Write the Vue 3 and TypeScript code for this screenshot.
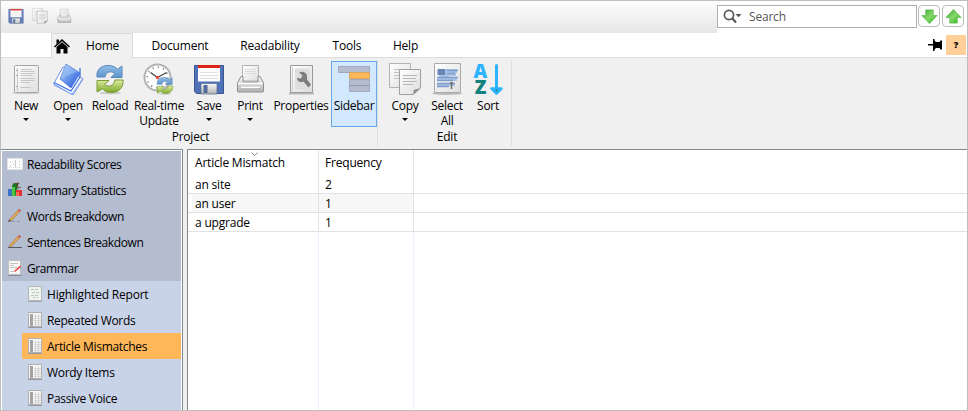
<script setup lang="ts">
import { ref } from 'vue'

interface RibbonItem {
  icon: string
  label: string
  second?: string
  menu?: boolean
  size: string
  active?: boolean
}

const tabs = [
  { name: 'Document', size: 't-document' },
  { name: 'Readability', size: 't-readability' },
  { name: 'Tools', size: 't-tools' },
  { name: 'Help', size: 't-help' },
]

const projectItems: RibbonItem[] = [
  { icon: 'new', label: 'New', menu: true, size: 'w38' },
  { icon: 'open', label: 'Open', menu: true, size: 'w46' },
  { icon: 'reload', label: 'Reload', size: 'w38' },
  { icon: 'realtime', label: 'Real-time', second: 'Update', size: 'w60' },
  { icon: 'save', label: 'Save', menu: true, size: 'w40' },
  { icon: 'print', label: 'Print', menu: true, size: 'w42' },
  { icon: 'properties', label: 'Properties', size: 'w60' },
  { icon: 'sidebar', label: 'Sidebar', size: 'w46', active: true },
]
const editItems: RibbonItem[] = [
  { icon: 'copy', label: 'Copy', menu: true, size: 'w48' },
  { icon: 'select', label: 'Select', second: 'All', size: 'w36' },
  { icon: 'sort', label: 'Sort', size: 'w46' },
]
const groups = [
  { name: 'Project', items: projectItems, side: 'project' },
  { name: 'Edit', items: editItems, side: 'edit' },
]

const sections = [
  { icon: 'scores', label: 'Readability Scores' },
  { icon: 'stats', label: 'Summary Statistics' },
  { icon: 'words', label: 'Words Breakdown' },
  { icon: 'sentences', label: 'Sentences Breakdown' },
  { icon: 'grammar', label: 'Grammar' },
]
const pages = [
  { icon: 'report', label: 'Highlighted Report' },
  { icon: 'list', label: 'Repeated Words' },
  { icon: 'list', label: 'Article Mismatches' },
  { icon: 'list', label: 'Wordy Items' },
  { icon: 'list', label: 'Passive Voice' },
]
const selected = ref('Article Mismatches')

const rows = [
  { text: 'an site', count: 2 },
  { text: 'an user', count: 1 },
  { text: 'a upgrade', count: 1 },
]
</script>

<template>
  <div class="window">
    <svg class="defs" width="0" height="0" aria-hidden="true">
      <defs>
        <linearGradient id="g-paper" x1="0" y1="0" x2="1" y2="1">
          <stop offset="0" stop-color="#fff" /><stop offset="1" stop-color="#dedede" />
        </linearGradient>
        <linearGradient id="g-blue" x1="0" y1="0" x2="1" y2="1">
          <stop offset="0" stop-color="#c6dcfb" /><stop offset=".5" stop-color="#6696ea" /><stop offset="1" stop-color="#2050d8" />
        </linearGradient>
        <linearGradient id="g-arrow" x1="0" y1="0" x2="1" y2="1">
          <stop offset="0" stop-color="#38a02c" /><stop offset=".5" stop-color="#86d86a" /><stop offset="1" stop-color="#22b414" />
        </linearGradient>
        <linearGradient id="g-green" x1="0" y1="0" x2="0" y2="1">
          <stop offset="0" stop-color="#e0eda2" /><stop offset="1" stop-color="#7aa928" />
        </linearGradient>
        <linearGradient id="g-sky" x1="0" y1="0" x2="0" y2="1">
          <stop offset="0" stop-color="#91bfe8" /><stop offset="1" stop-color="#5f93cb" />
        </linearGradient>
        <linearGradient id="g-metal" x1="0" y1="0" x2="0" y2="1">
          <stop offset="0" stop-color="#f8f8f8" /><stop offset="1" stop-color="#b4b4b4" />
        </linearGradient>
      </defs>
      <symbol id="i-new" viewBox="0 0 32 32">
        <ellipse cx="16" cy="30" rx="14" ry="1.3" fill="#bbb" opacity=".6" />
        <rect x="4.5" y="2.5" width="24" height="27" rx="1" fill="url(#g-paper)" stroke="#a5a5a5" />
        <path d="M7.5 5v23" stroke="#c9c9c9" /><path d="M6.5 7v1M6.5 12v1M6.5 23v1" stroke="#999" />
        <path d="M10.5 6.5h11M10.5 8.5h14M10.5 10.5h14M10.5 12.5h12M10.5 15.5h14M10.5 17.5h14M10.5 19.5h9M10.5 24.5h10" stroke="#c6c6c6" stroke-width="1.2" />
      </symbol>
      <symbol id="i-open" viewBox="0 0 32 32">
        <path d="M1.500 21 11 4l20 12-10 16z" fill="#fff" stroke="#4a77e0" stroke-width=".8" />
        <path d="m2 22 18 9.300L31 15" fill="none" stroke="#7c9ff0" />
        <path d="m2 19.500 17 8.500 9-14V5" fill="none" stroke="#326be0" stroke-width="1.200" />
        <path d="M8 16 14 1l14 9-9 15z" fill="url(#g-blue)" stroke="#3c69d6" stroke-width=".7" />
        <path d="m8 16 17-7.500L14 1z" fill="#9cc0f5" opacity=".6" />
      </symbol>
      <symbol id="i-reload" viewBox="0 0 32 32">
        <ellipse cx="16" cy="30" rx="11" ry="1.5" fill="#ccc" />
        <path d="M3 14C2 6 8 2.5 14 2.5c5 0 8 2 9.5 3.8L28 3v11.5H17l4-4c-4-3-9-2-10 3.5z" fill="url(#g-sky)" stroke="#5686ba" />
        <path d="M29 17c1 8-5 12.5-11 12.5-5 0-8-1.5-9.5-3.8L3 29V17.5h12l-4.500 4c4 3 9 2 10.500-4.500z" fill="url(#g-green)" stroke="#7b9b34" />
      </symbol>
      <symbol id="i-realtime" viewBox="0 0 32 32">
        <circle cx="14.500" cy="14.500" r="13" fill="#fff" stroke="#b4b4b4" stroke-width="2" />
        <circle cx="14.500" cy="14.500" r="10.300" fill="none" stroke="#777" stroke-width="1.500" stroke-dasharray="1.200 4.190" />
        <path d="M14.500 14.500 7.500 9.500M14.500 14.500l9-5" stroke="#444" stroke-width="1.300" />
        <circle cx="14.500" cy="14.500" r="1.700" fill="#e24a3b" />
        <use href="#i-reload" x="12.500" y="13" width="19" height="19" />
      </symbol>
      <symbol id="i-save" viewBox="0 0 32 32">
        <path d="M1.500 2.500h29v28H3.500l-2-2z" fill="#5072b8" stroke="#3b5590" />
        <path d="M5 3h22v15.500H5z" fill="#fcfcfc" /><path d="M5 2h22v3H5z" fill="#dd2418" />
        <path d="M7 9.500h18M7 12.500h18M7 15.500h18" stroke="#dfdfdf" />
        <path d="M8 20.500h16V31H8z" fill="url(#g-metal)" stroke="#57688c" stroke-width=".7" /><path d="M10.500 22h4v8h-4z" fill="#52699c" />
      </symbol>
      <symbol id="i-print" viewBox="0 0 32 32">
        <path d="M8.500 2.500h16V18h-16z" fill="url(#g-paper)" stroke="#b1b1b1" />
        <path d="M11 6.500h11M11 8.500h11M11 10.500h11" stroke="#dcdcdc" />
        <path d="M7 13.500 3.500 20v8q0 1 1 1h24q1 0 1-1v-8L26 13.500h-2V19H9v-5.500z" fill="url(#g-metal)" stroke="#8f8f8f" />
        <path d="M4 20.500h25M7 24.500h19" stroke="#fff" stroke-width="1.500" /><path d="M6 26h21" stroke="#aaa" />
      </symbol>
      <symbol id="i-properties" viewBox="0 0 32 32">
        <path d="M4 30.500h25" stroke="#b9b9b9" stroke-width="2" />
        <path d="M5.500 2.500h22v27h-22z" fill="url(#g-paper)" stroke="#9a9a9a" />
        <path d="M7.500 4v24" stroke="#cacaca" /><path d="M10 5.500h15v21H10z" fill="#dedede" />
        <path d="M14 9.500c3-1.500 7.500-.5 8 3.500v3.500l4 5-2.500 3-5-6c-3 1.500-6.500 0-6.500-3.500l4 .5 1.500-3z" fill="#7d7d7d" />
      </symbol>
      <symbol id="i-sidebar" viewBox="0 0 32 32">
        <path d="M.5 3.500h31v6H.5z" fill="#b4bcd0" stroke="#a3a9ba" /><path d="M11.500 16.500h20v12h-20z" fill="#b4bcd0" stroke="#a3a9ba" />
        <path d="M11.500 22.500h20" stroke="#959cae" /><path d="M11.500 9.500h20v6h-20z" fill="#ffb85a" stroke="#d9a55f" />
      </symbol>
      <symbol id="i-copy" viewBox="0 0 32 32">
        <path d="M.5.500h21v24H.5z" fill="url(#g-paper)" stroke="#b2b2b2" />
        <path d="M5 6.500h13M5 9.500h13M5 12.500h7M5 15.500h7" stroke="#c4c4c4" />
        <path d="M10.500 6.500h21V25l-7 6.500h-14z" fill="url(#g-paper)" stroke="#9f9f9f" />
        <path d="M14 12.500h14M14 15.500h13M14 18.500h14M14 21.500h10" stroke="#b6b6b6" /><path d="M24.500 31.500V27l7-2z" fill="#8e8e8e" />
      </symbol>
      <symbol id="i-select" viewBox="0 0 32 32">
        <ellipse cx="16" cy="30.500" rx="15" ry="1.500" fill="#b9b9b9" />
        <path d="M3.500.5h26v29h-26z" fill="url(#g-paper)" stroke="#aaa" />
        <path d="M6 6h20v4h-1v3h-7v2h8v3H6v-4h2v-2H6z" fill="#a9c1e4" /><path d="M6 20h18v3H6z" fill="#a9c1e4" />
        <path d="M7 6h7v6H7z" fill="#6786b5" />
        <path d="M16 7.500h11M16 10.500h8M6 14.500h21M6 17.500h16M6 20.500h18M6 23.500h12" stroke="#7f9dca" stroke-width="1.500" />
        <path d="M20.500 20v6M19 20h3" stroke="#666" stroke-width="1.300" />
      </symbol>

      <symbol id="i-scores" viewBox="0 0 16 16">
        <path d="M.5 2.500h15v11H.5z" fill="#fdfdfd" stroke="#e4e4e4" />
        <path d="M8.500 4v7M3.500 6v1M3.500 9v1M12.500 5v1M12.500 8v1M6.500 8v1" stroke="#c3c9d1" /><path d="M2 11.500h12" stroke="#d7d7d7" stroke-dasharray="1 1" />
      </symbol>
      <symbol id="i-stats" viewBox="0 0 16 16">
        <path d="M1 7h5v7H1z" fill="#3b74c2" /><path d="M5 4h5v10H5z" fill="#32a335" /><path d="m5 4 1-2h4v10l-1 2z" fill="#187b28" /><path d="M5 5h3v9H5z" fill="#4bc83e" />
        <path d="m6 2 6-1-1 1.500H9.500L11 4 9.500 6H12" fill="none" stroke="#54401a" /><path d="M9 8h6v6H9z" fill="#e93232" /><path d="M9 10h3v4H9z" fill="#ff6658" />
        <path d="m13 4 1 2h-2z" fill="#745634" />
      </symbol>
      <symbol id="i-words" viewBox="0 0 16 16">
        <path d="m2 12 9-10 2 1.500L4 13z" fill="#e1ac58" stroke="#9a7044" stroke-width=".6" /><path d="m10.500 2.500 2-1.500 1.500 1-1.500 2z" fill="#cf5c4a" /><path d="m1 14 1-2.500L4 13z" fill="#454545" />
        <path d="M3 13.500h5M10 13.500h3" stroke="#8d96a9" />
      </symbol>
      <symbol id="i-sentences" viewBox="0 0 16 16">
        <path d="m2 12 9-10 2 1.500L4 13z" fill="#e1ac58" stroke="#9a7044" stroke-width=".6" /><path d="m10.500 2.500 2-1.500 1.500 1-1.500 2z" fill="#cf5c4a" /><path d="M1 13.500h14" stroke="#555b69" />
      </symbol>
      <symbol id="i-grammar" viewBox="0 0 16 16">
        <path d="M1.500.5h12v14h-12z" fill="#f6f6f6" stroke="#bdbdbd" /><path d="M3 3.500h8M3 5.500h4M3 7.500h7M3 11.500h4" stroke="#c2c2c2" /><path d="M1 15.500h14" stroke="#8890a0" />
        <path d="m7 11 6-5.500 1 1.500-6 5z" fill="#e64848" />
      </symbol>
      <symbol id="i-report" viewBox="0 0 16 16">
        <path d="M1.500.5h13v14h-13z" fill="#f0f2f0" stroke="#b4b8b6" /><path d="M4 3.500h7M5 6.500h8M4 9.500h7M6 11.500h5" stroke="#b4cab8" stroke-dasharray="3 1" /><path d="M1 15.500h14" stroke="#a1a7b1" />
      </symbol>
      <symbol id="i-list" viewBox="0 0 16 16">
        <path d="M1.500.5h13v14h-13z" fill="#f7f7f7" stroke="#b0b0b0" /><path d="M3 2h3v12H3z" fill="#a3a3a3" />
        <path d="M7 4.500h7M7 6.500h7M7 8.500h7M7 10.500h7M7 12.500h7M8.500 2v12M11.500 2v12" stroke="#cecece" stroke-width=".8" /><path d="M1 15.500h14" stroke="#949aa4" />
      </symbol>
    </svg>

    <header class="titlebar">
      <div class="quick">
        <svg class="disk"><use href="#i-save" /></svg>
        <svg class="faded"><use href="#i-copy" /></svg>
        <svg class="faded"><use href="#i-print" /></svg>
      </div>
      <div class="searchbar">
        <div class="search">
          <svg class="glass" viewBox="0 0 20 16">
            <circle cx="6" cy="6" r="4.600" fill="none" stroke="#555" stroke-width="1.700" /><path d="m9 9 4 4.500" stroke="#555" stroke-width="2.200" /><path d="M12.500 5h6l-3 3.300z" fill="#555" />
          </svg>
          <span>Search</span>
        </div>
        <button class="step" aria-label="Next">
          <svg viewBox="0 0 18 18"><path d="M5 2h8v6h4L9 16.500 1 8h4z" fill="url(#g-arrow)" stroke="#64bd55" stroke-width=".8" /></svg>
        </button>
        <button class="step" aria-label="Previous">
          <svg viewBox="0 0 18 18"><path d="M5 16h8v-6h4L9 1.500 1 10h4z" fill="url(#g-arrow)" stroke="#64bd55" stroke-width=".8" /></svg>
        </button>
      </div>
    </header>

    <nav class="tabs">
      <div class="tab home">
        <svg viewBox="0 0 16 16"><path d="M0 8.500 8 1l8 7.500-1 1L8 3.200 1 9.500z" /><path d="M2.500 9 8 4.200 13.500 9v6.500h-4V11h-3v4.500h-4zM2.500 1.500H5V4L2.500 6.300z" /></svg>
        <span>Home</span>
      </div>
      <div v-for="tab in tabs" :key="tab.name" class="tab" :class="tab.size">{{ tab.name }}</div>
      <div class="tools">
        <svg viewBox="0 0 14 12"><path d="M0 5h5V0h1.500v1.500L8 3h3.500l1-1.500H14v9h-1.500L11.500 9H8l-1.500 1.500V12H5V6.500H0z" /></svg>
        <span class="help">?</span>
      </div>
    </nav>

    <section class="ribbon">
      <div v-for="group in groups" :key="group.name" class="group">
        <div class="items">
          <div v-for="item in group.items" :key="item.label" class="item" :class="[item.size, { active: item.active }]">
            <svg v-if="item.icon === 'sort'" class="big" viewBox="0 0 32 32">
              <text class="letter a" x="8.5" y="14.5">A</text>
              <text class="letter z" x="8.5" y="31">Z</text>
              <path d="M24.500 2.500V27" stroke="#2eb3ff" stroke-width="3" stroke-linecap="round" />
              <path d="m19.500 25.500 5 5 5-5z" fill="#12827d" stroke="#2eb3ff" stroke-width="2.500" stroke-linejoin="round" />
            </svg>
            <svg v-else class="big"><use :href="'#i-' + item.icon" /></svg>
            <span>{{ item.label }}</span>
            <span v-if="item.second">{{ item.second }}</span>
            <i v-if="item.menu" class="caret"></i>
          </div>
        </div>
        <div class="caption" :class="group.side">{{ group.name }}</div>
      </div>
    </section>

    <main class="body">
      <aside class="sidebar">
        <div class="sections">
          <div v-for="s in sections" :key="s.label" class="entry">
            <svg><use :href="'#i-' + s.icon" /></svg><span>{{ s.label }}</span>
          </div>
        </div>
        <div v-for="(p, i) in pages" :key="p.label" class="entry sub" :class="{ selected: p.label === selected, wide: i === 0 }" @click="selected = p.label">
          <svg><use :href="'#i-' + p.icon" /></svg><span>{{ p.label }}</span>
        </div>
      </aside>
      <div class="list">
        <div class="line head">
          <div class="cell first">
            <svg class="sortmark" viewBox="0 0 7 4"><path d="m.5.5 3 3 3-3" fill="none" stroke="#888" /></svg>
            Article Mismatch
          </div>
          <div class="cell second">Frequency</div>
        </div>
        <div v-for="row in rows" :key="row.text" class="line row">
          <div class="cell first"><span>{{ row.text }}</span></div>
          <div class="cell second"><span>{{ row.count }}</span></div>
        </div>
        <div class="line rest">
          <div class="cell first"></div>
          <div class="cell second"></div>
        </div>
      </div>
    </main>
  </div>
</template>

<style>
body { overflow: hidden; }
</style>

<style scoped>
* { box-sizing: border-box; }
.window { width: 968px; height: 411px; border: 1px solid #bebebe; background: #f0f0f0; display: flex; flex-direction: column; overflow: hidden; color: #000; font: 12px/15px "Open Sans", "Noto Sans", sans-serif; letter-spacing: -0.2px; white-space: nowrap; }
.defs { position: absolute; }
svg { display: block; flex: none; }

.titlebar { height: 32px; flex: none; display: flex; background: #fff; }
.quick { width: 716px; display: flex; gap: 8px; padding: 7px 0 0 7px; background: linear-gradient(#fdfdfd, #e6e6e6); }
.quick svg { width: 16px; height: 16px; }
.disk { opacity: .88; }
.faded { opacity: .9; }
.searchbar { display: flex; padding-top: 4px; }
.search { width: 200px; height: 23px; border: 1px solid #abadb3; background: #fff; display: flex; align-items: center; color: #555; }
.glass { width: 20px; height: 16px; margin: 1px 6px 0 5px; }
.step { width: 22px; height: 22px; margin-left: 2px; padding: 0; border: 1px solid #bcbcbc; border-radius: 4px; background: #fdfdfd; display: grid; place-items: center; }
.search + .step { margin-left: 1px; }
.step svg { width: 17px; height: 17px; }

.tabs { height: 25px; flex: none; display: flex; background: #fff; padding-left: 50px; border-bottom: 1px solid #dcdcdc; }
.tab { text-align: center; line-height: 25px; }
.home { width: 82px; height: 25px; background: #f0f0f0; border: 1px solid #dcdcdc; border-bottom: 0; display: flex; align-items: center; gap: 16px; padding-left: 2px; }
.home svg { width: 16px; height: 16px; }
.home span { line-height: 23px; padding-bottom: 1px; }
.t-document { width: 94px; }
.t-readability { width: 86px; }
.t-tools { width: 68px; }
.t-help { width: 49px; }
.tools { margin-left: auto; display: flex; align-items: center; gap: 4px; padding-right: 1px; }
.tools svg { width: 14px; height: 12px; }
.help { width: 20px; height: 20px; background: #ffcf97; border-radius: 1px; text-align: center; font: 800 9px/20px "Open Sans", sans-serif; }

.ribbon { height: 91px; flex: none; display: flex; padding-left: 3px; letter-spacing: -0.3px; }
.group { padding: 3px 0 4px 3px; display: flex; flex-direction: column; background: linear-gradient(#dedede, #dedede) right 2px / 1px 86px no-repeat; padding-right: 1px; }
.items { display: flex; height: 66px; }
.item { height: 66px; display: flex; flex-direction: column; align-items: center; padding-top: 2px; }
.item.active { border: 1px solid #66a7e8; background: #d1e8ff; padding-top: 1px; }
.big { width: 32px; height: 32px; margin-bottom: 3px; overflow: visible; }
.letter { font: 800 19px "Open Sans", sans-serif; text-anchor: middle; letter-spacing: 0; }
.a { fill: #2eb3ff; }
.z { fill: #12827d; }
.item span { line-height: 15px; }
.caret { width: 0; height: 0; margin-top: 5px; border: 3px solid transparent; border-top-color: #000; border-bottom: 0; }
.w36 { width: 36px; } .w38 { width: 38px; } .w40 { width: 40px; } .w42 { width: 42px; } .w46 { width: 46px; } .w48 { width: 48px; } .w60 { width: 60px; }
.caption { text-align: center; line-height: 16px; margin-top: 2px; letter-spacing: -0.2px; }
.project { padding-right: 3px; }
.edit { padding-left: 2px; }

.body { flex: 1; display: flex; gap: 4px; min-height: 0; }
.sidebar { width: 182px; border: solid #828790; border-width: 1px 1px 0 0; box-shadow: inset -1px 1px #fff, inset 1px 0 #fff; background: #c9d3e8; padding: 1px 1px 0 1px; letter-spacing: -0.4px; }
.sections { background: #b4bcd0; }
.entry { height: 26px; display: flex; align-items: center; gap: 4px; padding-left: 5px; }
.entry svg { width: 16px; height: 16px; }
.sub { margin-left: 20px; letter-spacing: -0.3px; }
.wide { letter-spacing: -0.2px; }
.selected { background: #ffb759; }

.list { flex: 1; background: #fff; border: solid #828790; border-width: 1px 0 0 1px; display: flex; flex-direction: column; }
.line { display: flex; }
.cell { border-right: 1px solid #e2e2e2; display: flex; }
.first { width: 131px; padding-left: 4px; }
.second { width: 95px; }
.head { height: 25px; }
.head .cell { align-items: center; position: relative; padding-left: 7px; }
.head .second { padding-left: 6px; }
.sortmark { position: absolute; left: 63px; top: 2px; width: 7px; height: 4px; }
.row { height: 19px; border-bottom: 1px solid #e2e2e2; line-height: 20px; }
.row span { flex: 1; height: 18px; padding-left: 3px; }
.row .second span { padding-left: 6px; }
.row:nth-child(3) span { background: #f7f7f7; }
.rest { flex: 1; }
.rest .cell { border-color: #ebf2fd; }
</style>
